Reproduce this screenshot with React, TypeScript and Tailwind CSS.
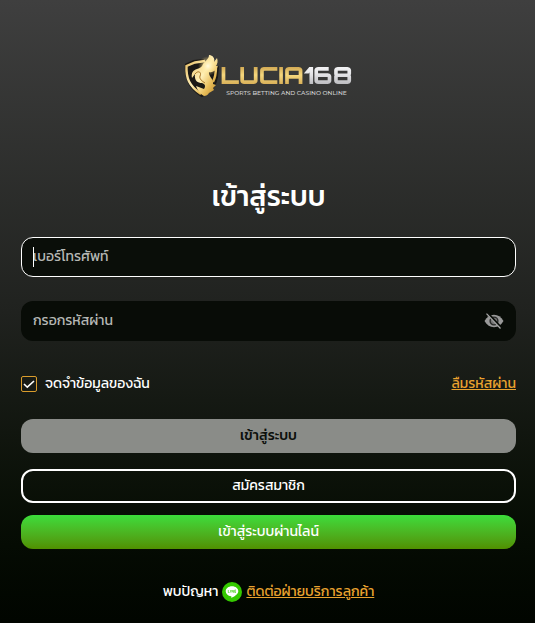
import { useState } from "react";

function Emblem() {
  return (
    <svg viewBox="0 0 36 46" className="h-[46px] w-9 shrink-0" aria-hidden="true">
      <defs>
        <linearGradient id="gold" x1="0" y1="0" x2="1" y2="1">
          <stop offset="0" stopColor="#e8c068" />
          <stop offset="0.45" stopColor="#fff0b8" />
          <stop offset="0.7" stopColor="#e8bd5a" />
          <stop offset="1" stopColor="#b98424" />
        </linearGradient>
        <radialGradient id="glow">
          <stop offset="0" stopColor="#fffbe0" />
          <stop offset="0.5" stopColor="#ffe9a0" stopOpacity="0.5" />
          <stop offset="1" stopColor="#ffd66b" stopOpacity="0" />
        </radialGradient>
      </defs>
      <path d="M20 8 10 9 3 12c-1 12 2 22 15 30 8-4 13-11 14-18l1-11" fill="#1b1916" stroke="#1b1916" strokeWidth="4" />
      <path d="M21 8 11 9.500 2.500 13C2 25 5 33 17 41M29 29c2-4 3-9 3-15l-3-1" fill="none" stroke="url(#gold)" strokeWidth="2.400" />
      <path d="M25 2c0 4-4 6-6 9-1 3-3 4-6 5-4 1-6 4-5 9l3-4c-1 7 3 9 7 9 3 1 4 3 2 6l-8-3c2 5 4 8 8 10 2 0 4-1 5-3l5-3-1-2 3-3-3-1c1-5-5-8-4-12 3 1 7-1 9-6l-3 1c3-3 3-6 2-9l-3 4c1-4-1-6-4-7Z" fill="url(#gold)" />
      <path d="M11 21c3-4 7-2 5 2-1 3 2 5 5 7" fill="none" stroke="#a87528" />
      <circle cx="24" cy="13" r="10" fill="url(#glow)" />
    </svg>
  );
}

function EyeOff() {
  return (
    <svg viewBox="0 0 20 16" className="h-4 w-5" aria-hidden="true">
      <path d="M.5 8C3 3.800 6 1.800 10 1.800S17 3.800 19.500 8C17 12.200 14 14.200 10 14.200S3 12.200.5 8Z" fill="#999" />
      <circle cx="10" cy="8" r="3.900" fill="#777" stroke="#282a28" strokeWidth="1.400" />
      <path d="m3.500.2 14 15" stroke="#0a0e09" strokeWidth="2.600" />
      <path d="m2.500.7 14 14.800" stroke="#aaa" strokeWidth="1.200" />
    </svg>
  );
}

function LineIcon() {
  return (
    <svg viewBox="0 0 20 20" className="h-5 w-5 shrink-0" role="img" aria-label="LINE">
      <circle cx="10" cy="10" r="10" fill="#35c900" />
      <path d="M10 4.200c-3.600 0-6.300 2.200-6.300 5.100 0 2.600 2.200 4.600 5.300 5 .6.100.5.700.3 1.700 3.200-1.500 7-4 7-6.700 0-2.900-2.700-5.100-6.300-5.100Z" fill="#fff" />
      <path d="M6.300 8v2.500h1.200M8.600 8v2.500M9.900 10.500V8l1.500 2.500V8M14 8h-1.300v2.500H14M12.700 9.200H14" fill="none" stroke="#35c900" strokeWidth=".6" />
    </svg>
  );
}

export default function App() {
  const [phone, setPhone] = useState("");
  const [remember, setRemember] = useState(true);
  const [shown, setShown] = useState(false);

  return (
    <main className="min-h-screen bg-linear-to-b from-[#3f3f3f] via-[#20221f] to-[#010500] pt-[53px] pr-[19px] pb-5 pl-[21px] font-['Kanit','Noto_Sans_Thai','Noto_Sans',sans-serif] text-sm text-white">
      <div className="flex h-[46px] items-center justify-center">
        <Emblem />
        <div className="flex flex-col items-center pt-1.5 font-['Orbitron','DejaVu_Sans',sans-serif]">
          <div className="flex text-2xl leading-7 font-black">
            <span className="bg-linear-to-b from-[#b98a35] via-[#f5d77d] to-[#c99c45] bg-clip-text text-transparent">LUCIA</span>
            <span className="bg-linear-to-b from-white via-[#e2e2e5] to-[#a8a8ac] bg-clip-text text-transparent">168</span>
          </div>
          <p className="font-['Montserrat','Liberation_Sans',sans-serif] text-[6px] leading-2 font-medium whitespace-nowrap text-[#d0d0d0]">SPORTS BETTING AND CASINO ONLINE</p>
        </div>
      </div>

      <h1 className="mt-[76px] text-center text-[28px] leading-[42px] font-medium">เข้าสู่ระบบ</h1>

      <form onSubmit={(e) => e.preventDefault()} className="mt-5 flex flex-col">
        <div className="relative">
          <input
            type="tel"
            autoFocus
            value={phone}
            onChange={(e) => setPhone(e.target.value)}
            aria-label="เบอร์โทรศัพท์"
            placeholder="เบอร์โทรศัพท์"
            className="block h-10 w-full rounded-xl border border-white bg-[#0a0e09] px-[11px] pb-0.5 outline-none placeholder:text-[#b5b7b4]"
          />
          {phone === "" && <span className="pointer-events-none absolute top-2.5 left-3 h-5 w-px bg-white" />}
        </div>
        <div className="mt-6 flex h-10 items-center rounded-xl bg-[#080c07] px-3">
          <input
            type={shown ? "text" : "password"}
            aria-label="กรอกรหัสผ่าน"
            placeholder="กรอกรหัสผ่าน"
            className="h-10 min-w-0 flex-1 bg-transparent pb-0.5 outline-none placeholder:text-[#b5b7b4]"
          />
          <button type="button" aria-label="แสดงรหัสผ่าน" onClick={() => setShown(!shown)}>
            <EyeOff />
          </button>
        </div>

        <div className="mt-[31px] flex h-6 items-center justify-between">
          <label className="flex items-center gap-2">
            <span className="grid h-4 w-4 place-items-center">
              <input
                type="checkbox"
                checked={remember}
                onChange={(e) => setRemember(e.target.checked)}
                className="peer col-start-1 row-start-1 h-4 w-4 appearance-none rounded-xs border border-[#d99c2c]"
              />
              <svg viewBox="0 0 16 16" className="pointer-events-none invisible col-start-1 row-start-1 h-4 w-4 peer-checked:visible" aria-hidden="true">
                <path d="m3 8 3.300 3.200L13 5" fill="none" stroke="#fff" strokeWidth="1.600" />
              </svg>
            </span>
            จดจำข้อมูลของฉัน
          </label>
          <a href="#forgot" className="text-[#e9a22f] underline">ลืมรหัสผ่าน</a>
        </div>

        <button type="submit" className="mt-[23px] h-[34px] rounded-xl bg-[#8a8c88] font-medium text-[#0d100c]">เข้าสู่ระบบ</button>
        <button type="button" className="mt-4 h-[34px] rounded-xl border-2 border-white">สมัครสมาชิก</button>
        <button type="button" className="mt-3 h-[34px] rounded-xl bg-linear-to-b from-[#3bdd3b] to-[#509000]">เข้าสู่ระบบผ่านไลน์</button>
      </form>

      <p className="mt-[33px] flex items-center justify-center gap-1">
        พบปัญหา
        <LineIcon />
        <a href="#support" className="text-[#e9a22f] underline">ติดต่อฝ่ายบริการลูกค้า</a>
      </p>
    </main>
  );
}
